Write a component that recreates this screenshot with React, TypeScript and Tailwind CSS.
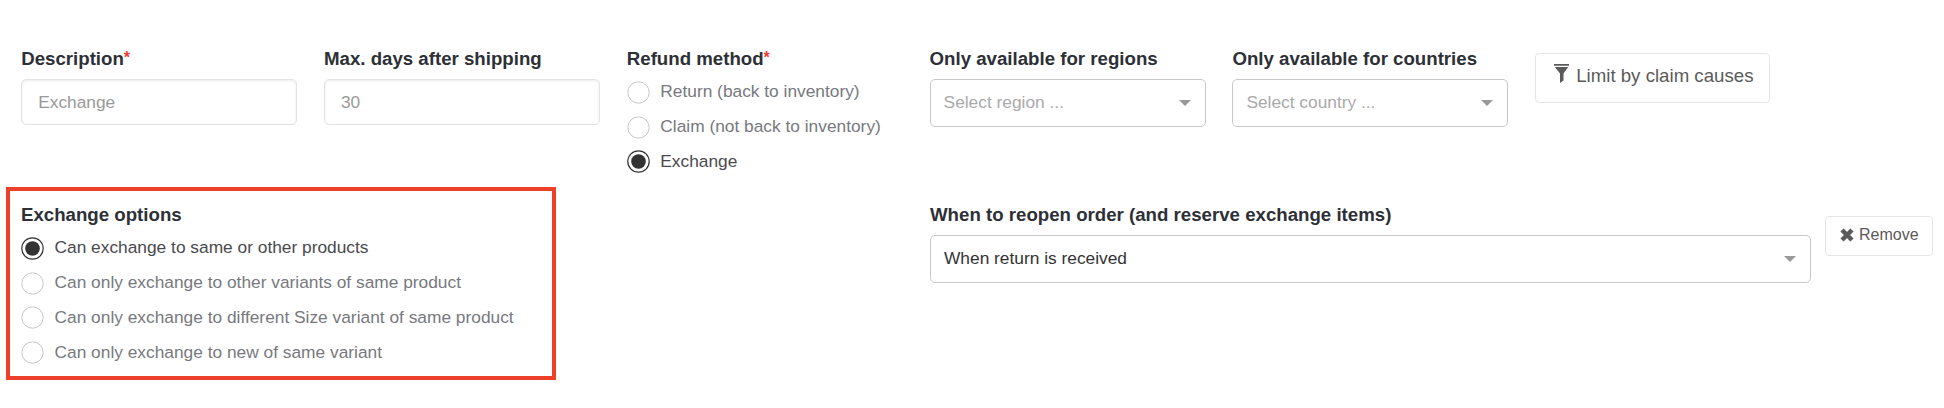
import type { ReactNode } from 'react';

function Label({ children, required }: { children: ReactNode; required?: boolean }) {
  return (
    <div className="flex h-[26px] text-[18.67px] leading-[26px] font-bold whitespace-nowrap text-[#2d3036]">
      {children}
      {required && <span className="text-[16px] leading-[23px] font-bold text-[#f03a2c]">*</span>}
    </div>
  );
}

function Input({ value }: { value: string }) {
  return (
    <div className="flex h-[46px] items-center rounded-[5px] border border-[#e0e4e6] px-4 pt-px text-[17.33px] text-[#999] shadow-[inset_0_1px_3px_rgba(0,0,0,0.08)]">
      {value}
    </div>
  );
}

function Select({ value, placeholder }: { value?: string; placeholder?: string }) {
  return (
    <div className="flex h-12 items-center justify-between rounded-[5px] border border-[#c9c9c9] pr-3.5 pl-[13px] text-[17.33px]">
      {value ? <span className="text-[#333]">{value}</span> : <span className="text-[#aaa]">{placeholder}</span>}
      <svg width="12" height="6" viewBox="0 0 12 6" fill="#999">
        <path d="M0 0h12L6 6z" />
      </svg>
    </div>
  );
}

function Radio({ label, checked }: { label: string; checked?: boolean }) {
  return (
    <div className="flex h-[34.8px] items-center gap-[10.5px] whitespace-nowrap">
      <svg className="shrink-0" width="23" height="23" viewBox="0 0 23 23" fill="none">
        <circle cx="11.500" cy="11.500" r="10.700" fill="#fff" stroke={checked ? '#333' : '#c3c6cb'} strokeWidth={checked ? 1.2 : 1} />
        {checked && <circle cx="11.500" cy="11.500" r="7.300" fill="#333" />}
      </svg>
      <span className={checked ? 'text-[17.33px] text-[#4a4a4e]' : 'text-[17.33px] text-[#77797e]'}>{label}</span>
    </div>
  );
}

export default function App() {
  return (
    <div className="h-[408px] w-[1944px] overflow-hidden bg-white pt-[46px] font-['Liberation_Sans',Arial,sans-serif]">
      <div className="flex h-[141px] items-start gap-[26.8px] pl-[21.2px]">
        <div className="flex w-[276px] flex-col gap-[7px]">
          <Label required>Description</Label>
          <Input value="Exchange" />
        </div>
        <div className="flex w-[276px] flex-col gap-[7px]">
          <Label>Max. days after shipping</Label>
          <Input value="30" />
        </div>
        <div className="w-[276px]">
          <Label required>Refund method</Label>
          <div className="pt-[3px]">
            <Radio label="Return (back to inventory)" />
            <Radio label="Claim (not back to inventory)" />
            <Radio label="Exchange" checked />
          </div>
        </div>
        <div className="flex w-[276px] flex-col gap-[7px]">
          <Label>Only available for regions</Label>
          <Select placeholder="Select region ..." />
        </div>
        <div className="flex w-[276px] flex-col gap-[7px]">
          <Label>Only available for countries</Label>
          <Select placeholder="Select country ..." />
        </div>
        <button className="mt-[7px] flex h-[50px] w-[235px] items-start gap-[7px] rounded-[4px] border border-[#e3e6e8] pt-[9px] pl-[18px] text-[18.67px] leading-[26px] whitespace-nowrap text-[#5a5a5a]">
          <svg className="mt-px" width="15" height="19" viewBox="0 0 15 19" fill="#5a5a5a">
            <path d="M0 0h15v1.800H0zM.8 3h13.400L9.500 9.500v7L6 19V9.500z" />
          </svg>
          Limit by claim causes
        </button>
      </div>
      <div className="flex items-start pl-1.5">
        <div className="h-[193px] w-[550px] border-4 border-[#ed4028] pt-[11px] pl-[11px]">
          <Label>Exchange options</Label>
          <div className="pt-[3px]">
            <Radio label="Can exchange to same or other products" checked />
            <Radio label="Can only exchange to other variants of same product" />
            <Radio label="Can only exchange to different Size variant of same product" />
            <Radio label="Can only exchange to new of same variant" />
          </div>
        </div>
        <div className="mt-[15px] ml-[374px] flex w-[881px] flex-col gap-[7px]">
          <Label>When to reopen order (and reserve exchange items)</Label>
          <Select value="When return is received" />
        </div>
        <button className="mt-[29px] ml-3.5 flex h-10 w-[108px] items-center gap-[5px] rounded-[4px] border border-[#e3e6e8] pb-0.5 pl-3.5 text-[16px] text-[#5a5a5a]">
          <svg width="14" height="14" viewBox="0 0 14 14" stroke="#5a5a5a" strokeWidth="4.500">
            <path d="M2 2l10 10M12 2L2 12" />
          </svg>
          Remove
        </button>
      </div>
    </div>
  );
}
